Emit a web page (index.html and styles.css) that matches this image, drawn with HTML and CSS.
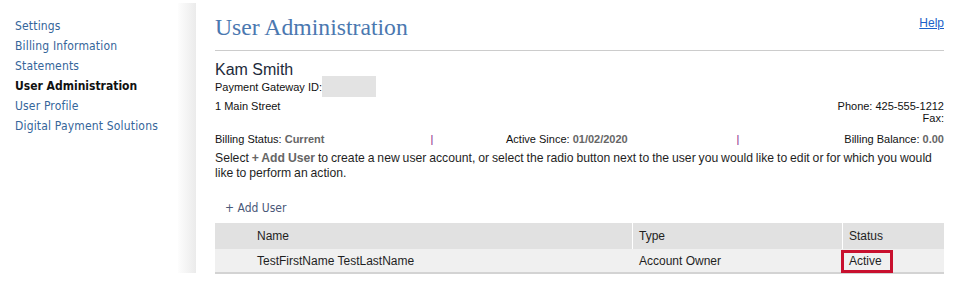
FILE: index.html
```html
<!DOCTYPE html>
<html lang="en">
<head>
    <meta charset="UTF-8">
    <title>User Administration</title>
    <link rel="stylesheet" href="styles.css">
</head>
<body>
    <div class="page">
        <nav class="sidebar">
            <ul class="side-menu">
                <li><a href="#">Settings</a></li>
                <li><a href="#">Billing Information</a></li>
                <li><a href="#">Statements</a></li>
                <li class="current">User Administration</li>
                <li><a href="#">User Profile</a></li>
                <li><a href="#">Digital Payment Solutions</a></li>
            </ul>
            <div class="side-shadow"></div>
        </nav>

        <main class="content">
            <div class="page-head">
                <h1 class="page-title">User Administration</h1>
                <a class="help-link" href="#">Help</a>
            </div>

            <div class="account-name">Kam Smith</div>
            <div class="gateway">
                <span>Payment Gateway ID:</span>
                <span class="gateway-id"></span>
            </div>

            <div class="address-row">
                <div>1 Main Street</div>
                <div class="contact">
                    <div>Phone: 425-555-1212</div>
                    <div>Fax:</div>
                </div>
            </div>

            <div class="billing-row">
                <div>Billing Status: <b>Current</b></div>
                <div class="sep">|</div>
                <div class="since">Active Since: <b>01/02/2020</b></div>
                <div class="sep">|</div>
                <div class="balance">Billing Balance: <b>0.00</b></div>
            </div>

            <p class="intro">Select <b>+ Add User</b> to create a new user account, or select the radio button next to the user you would like to edit or for which you would like to perform an action.</p>

            <a class="add-user" href="#">+ Add User</a>

            <div class="user-table">
                <div class="cell head"></div>
                <div class="cell head name-col">Name</div>
                <div class="cell head col-line">Type</div>
                <div class="cell head col-line">Status</div>

                <div class="cell"></div>
                <div class="cell name-col">TestFirstName TestLastName</div>
                <div class="cell col-line">Account Owner</div>
                <div class="cell col-line"><span class="status-mark">Active</span></div>
            </div>
        </main>
    </div>
</body>
</html>
```

FILE: styles.css
```css
body {
    margin: 0;
    background: #fff;
    font-family: "Liberation Sans", Arial, sans-serif;
    color: #1f1f1f;
}

.page {
    display: flex;
    align-items: flex-start;
}

/* left menu */
.sidebar {
    display: flex;
    margin-top: 3px;
    height: 270px;
}
.side-menu {
    list-style: none;
    margin: 0;
    padding: 13px 0 0 15px;
    width: 163px;
    font-family: "DejaVu Sans Condensed", "DejaVu Sans", sans-serif;
    font-size: 12px;
    letter-spacing: 0.17px;
    line-height: 20px;
}
.side-menu a {
    color: #35659a;
    text-decoration: none;
}
.side-menu .current {
    font-weight: bold;
    letter-spacing: 0;
    color: #111;
}
.side-shadow {
    width: 18px;
    background: linear-gradient(to right, #fdfdfd, #ebebeb);
}

/* main column */
.content {
    width: 729px;
    margin-left: 19px;
}
.page-head {
    display: flex;
    justify-content: space-between;
    align-items: flex-start;
    padding-top: 13px;
    padding-bottom: 9px;
    border-bottom: 1px solid #cccccc;
}
.page-title {
    margin: 0;
    font-family: "Liberation Serif", Georgia, serif;
    font-weight: normal;
    font-size: 23.7px;
    line-height: 28px;
    color: #4b78b0;
}
.help-link {
    margin-top: 3px;
    font-size: 12px;
    color: #1a5fc9;
}

.account-name {
    margin-top: 13px;
    font-size: 16px;
    line-height: 12px;
    color: #1d2a3a;
}
.gateway {
    display: flex;
    align-items: center;
    height: 21px;
    font-size: 11px;
    color: #111;
}
.gateway-id {
    width: 54px;
    height: 21px;
    background: #e3e3e3;
}

.address-row {
    display: flex;
    justify-content: space-between;
    margin-top: 3px;
    font-size: 11px;
    line-height: 12px;
    color: #111;
}
.contact {
    text-align: right;
}

.billing-row {
    display: grid;
    grid-template-columns: 214px 6px 300px 6px 1fr;
    margin-top: 9px;
    font-size: 11px;
    line-height: 13px;
    color: #111;
}
.billing-row b {
    color: #666;
}
.sep {
    color: #8b1a8b;
    text-align: center;
}
.since {
    padding-left: 71px;
}
.balance {
    text-align: right;
}

.intro {
    margin: 5px 0 0;
    font-size: 12.2px;
    word-spacing: -0.5px;
    line-height: 15px;
    color: #1f1f1f;
}
.intro b {
    color: #666;
}

.add-user {
    display: block;
    margin: 19px 0 0 10px;
    font-family: "DejaVu Sans Condensed", "DejaVu Sans", sans-serif;
    font-size: 12px;
    line-height: 16px;
    color: #4a5878;
    text-decoration: none;
}

/* users grid */
.user-table {
    display: grid;
    grid-template-columns: 35px 382px 210px 1fr;
    grid-template-rows: 26px 23px;
    margin-top: 7px;
    background: #f0f0f0;
    border-bottom: 2px solid #d3d3d3;
    font-size: 12px;
    color: #1f1f1f;
}
.cell {
    display: flex;
    align-items: center;
    padding-left: 6px;
    border-left: 1px solid transparent;
    white-space: nowrap;
}
.cell.head {
    background: #e1e1e1;
}
.cell.head.col-line {
    border-left-color: #fff;
}
.cell:first-child, .cell.name-col {
    padding-left: 0;
    border-left: 0;
}
.cell.name-col {
    padding-left: 7px;
}
.status-mark {
    margin: 2px 0 0 -8px;
    padding: 1px 8px 1px 5px;
    border: 3px solid #c8102e;
    line-height: 15px;
}
```
